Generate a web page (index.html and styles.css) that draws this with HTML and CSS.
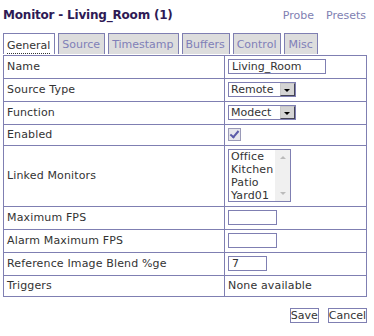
FILE: index.html
```html
<!DOCTYPE html>
<html lang="en">
<head>
    <meta charset="UTF-8">
    <title>Monitor - Living_Room (1)</title>
    <link rel="stylesheet" href="styles.css">
</head>
<body>
    <div class="page">
        <div class="header">
            <h2>Monitor - Living_Room (1)</h2>
            <div class="links">
                <a href="#">Probe</a>
                <a href="#">Presets</a>
            </div>
        </div>
        <ul class="tabs">
            <li class="active"><a href="#">General</a></li>
            <li><a href="#">Source</a></li>
            <li><a href="#">Timestamp</a></li>
            <li><a href="#">Buffers</a></li>
            <li><a href="#">Control</a></li>
            <li><a href="#">Misc</a></li>
        </ul>
        <table class="contentTable">
            <tr>
                <td class="label">Name</td>
                <td><input type="text" class="text wide" value="Living_Room"></td>
            </tr>
            <tr>
                <td class="label">Source Type</td>
                <td>
                    <span class="dropdown">
                        <select><option>Remote</option></select>
                        <span class="arrow"></span>
                    </span>
                </td>
            </tr>
            <tr>
                <td class="label">Function</td>
                <td>
                    <span class="dropdown">
                        <select><option>Modect</option></select>
                        <span class="arrow"></span>
                    </span>
                </td>
            </tr>
            <tr>
                <td class="label">Enabled</td>
                <td><input type="checkbox" class="check" checked></td>
            </tr>
            <tr>
                <td class="label">Linked Monitors</td>
                <td>
                    <div class="listbox">
                        <ul>
                            <li>Office</li>
                            <li>Kitchen</li>
                            <li>Patio</li>
                            <li>Yard01</li>
                        </ul>
                        <div class="scroll">
                            <span class="up"></span>
                            <span class="down"></span>
                        </div>
                    </div>
                </td>
            </tr>
            <tr>
                <td class="label">Maximum FPS</td>
                <td><input type="text" class="text small" value=""></td>
            </tr>
            <tr>
                <td class="label">Alarm Maximum FPS</td>
                <td><input type="text" class="text small" value=""></td>
            </tr>
            <tr>
                <td class="label">Reference Image Blend %ge</td>
                <td><input type="text" class="text tiny" value="7"></td>
            </tr>
            <tr>
                <td class="label">Triggers</td>
                <td>None available</td>
            </tr>
        </table>
        <div class="buttons">
            <button>Save</button>
            <button>Cancel</button>
        </div>
    </div>
</body>
</html>
```

FILE: styles.css
```css
body {
    margin: 0;
    font-family: "DejaVu Sans", Verdana, sans-serif;
    font-size: 11px;
    color: #333333;
    background: #ffffff;
}

.page {
    width: 364px;
    margin-left: 3px;
}

.header {
    display: flex;
    justify-content: space-between;
    align-items: center;
    height: 30px;
}

.header h2 {
    margin: 0;
    font-size: 12px;
    letter-spacing: -0.2px;
    font-weight: bold;
    color: #2e1a55;
}

.links {
    display: flex;
    gap: 12px;
    padding-right: 1px;
}

.links a {
    color: #7f7fb2;
    text-decoration: none;
}

.tabs {
    list-style: none;
    margin: 0;
    padding: 0;
    display: flex;
    gap: 3px;
    height: 21px;
    margin-top: 3px;
}

.tabs li {
    background: #dddddd;
    border: 1px solid #7f7fb2;
    border-bottom: none;
    padding: 0 4px 0 3px;
    display: flex;
    align-items: center;
}

.tabs li a {
    color: #8080b8;
    text-decoration: none;
}

.tabs li.active {
    background: #ffffff;
}

.tabs li.active a {
    color: #333333;
    border-bottom: 1px dotted #333333;
    padding-bottom: 1px;
    margin-bottom: -4px;
}

.contentTable {
    width: 364px;
    border-collapse: collapse;
    margin-top: 1px;
}

.contentTable td {
    border: 1px solid #7f7fb2;
    padding: 3px 3px 4px;
    line-height: 13px;
    letter-spacing: 0.15px;
}

.contentTable td.label {
    width: 214px;
}

.text {
    font-family: "DejaVu Sans", Verdana, sans-serif;
    font-size: 11px;
    color: #333333;
    border: 1px solid #7f7fb2;
    height: 15px;
    padding: 0 3px;
    box-sizing: border-box;
    margin: 0;
    display: block;
}

.text.wide { width: 98px; }
.text.small { width: 49px; }
.text.tiny { width: 39px; }

.dropdown {
    position: relative;
    display: block;
    width: 68px;
    height: 15px;
}

.dropdown select {
    appearance: none;
    -webkit-appearance: none;
    font-family: "DejaVu Sans", Verdana, sans-serif;
    font-size: 11px;
    color: #333333;
    width: 68px;
    height: 15px;
    border: 1px solid #7f7fb2;
    padding: 0 0 0 2px;
    margin: 0;
    background: #ffffff;
    box-sizing: border-box;
    border-radius: 0;
    display: block;
}

.dropdown .arrow {
    position: absolute;
    right: 1px;
    top: 1px;
    width: 13px;
    height: 11px;
    background: #d4d4d4;
    border: 1px solid #444455;
    border-top-color: #c8c8c8;
    border-left-color: #c8c8c8;
}

.dropdown .arrow::after {
    content: "";
    position: absolute;
    left: 3px;
    top: 5px;
    border-left: 3px solid transparent;
    border-right: 3px solid transparent;
    border-top: 3px solid #000000;
}

.check {
    appearance: none;
    -webkit-appearance: none;
    width: 13px;
    height: 13px;
    margin: 0;
    border: 1px solid #9a9ab8;
    background: #e6e6ec;
    position: relative;
    display: block;
}

.check::after {
    content: "";
    position: absolute;
    left: 3px;
    top: 0px;
    width: 3px;
    height: 7px;
    border: solid #5a5aa8;
    border-width: 0 2px 2px 0;
    transform: rotate(40deg);
}

.listbox {
    display: flex;
    width: 63px;
    height: 53px;
    border: 1px solid #7f7fb2;
    box-sizing: border-box;
}

.listbox ul {
    list-style: none;
    margin: 0;
    padding: 0 0 0 2px;
    flex: 1;
    font-size: 11px;
    line-height: 13px;
}

.scroll {
    width: 15px;
    background: #f0f0f0;
    position: relative;
}

.scroll .up,
.scroll .down {
    position: absolute;
    left: 5px;
    border-left: 3px solid transparent;
    border-right: 3px solid transparent;
}

.scroll .up {
    top: 6px;
    border-bottom: 3px solid #bbbbbb;
}

.scroll .down {
    bottom: 6px;
    border-top: 3px solid #bbbbbb;
}

.buttons {
    display: flex;
    justify-content: flex-end;
    gap: 9px;
    margin-top: 11px;
}

.buttons button {
    font-family: "DejaVu Sans", Verdana, sans-serif;
    font-size: 11px;
    color: #333333;
    background: #ffffff;
    border: 1px solid #7f7fb2;
    padding: 0;
    height: 15px;
    line-height: 12px;
    margin: 0;
}
```
